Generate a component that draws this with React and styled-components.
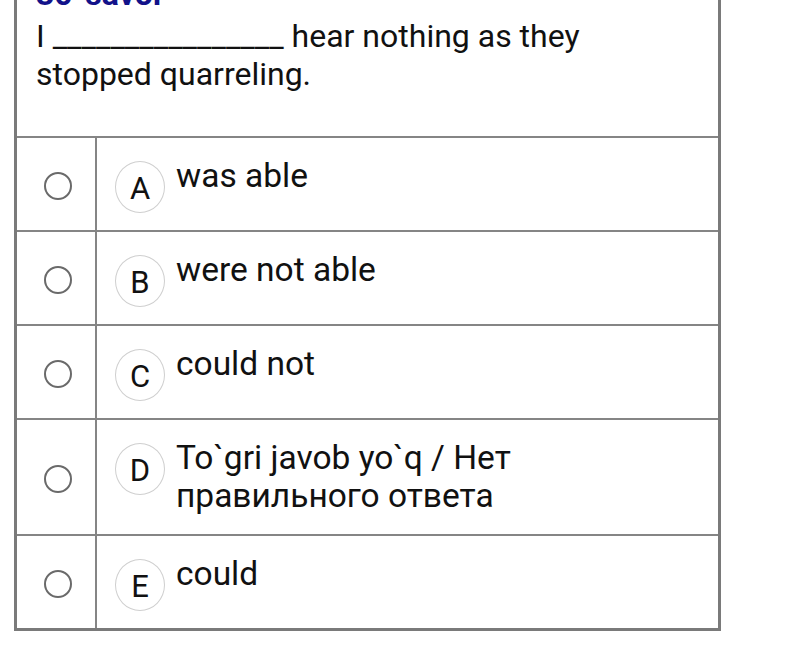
import React from 'react';
import styled, { createGlobalStyle } from 'styled-components';

const GlobalStyle = createGlobalStyle`
  body {
    margin: 0;
    background: #fff;
    font-family: Roboto, "Noto Sans", "Liberation Sans", sans-serif;
    color: #111;
  }
`;

const Page = styled.div`
  margin: -30px 0 0 14px;
  width: 707px;
`;

const Sheet = styled.section`
  border: 3px solid #7a7a7a;
  background: #fff;
`;

const Question = styled.div`
  padding: 2px 20px 43px 19px;
`;

const Title = styled.div`
  font-size: 32px;
  line-height: 38px;
  font-weight: 700;
  color: #12128a;
  margin-bottom: 4px;
`;

const Prompt = styled.div`
  font-size: 32px;
  line-height: 38px;
`;

const OptionRow = styled.div`
  display: grid;
  grid-template-columns: 80px 1fr;
  border-top: 2px solid #858585;
`;

const RadioCell = styled.div`
  display: flex;
  align-items: center;
  justify-content: center;
  padding-top: 4px;
  border-right: 2px solid #858585;
`;

const Radio = styled.span`
  width: 24px;
  height: 24px;
  border: 2px solid #6a6a6a;
  border-radius: 50%;
  margin-left: 4px;
`;

const AnswerCell = styled.div`
  display: flex;
  align-items: flex-start;
  padding: 19px 20px 17px 18px;
`;

const Letter = styled.span`
  flex: none;
  width: 48px;
  height: 47px;
  margin-top: 4px;
  border: 1px solid #cfcfcf;
  border-radius: 50%;
  display: flex;
  align-items: center;
  justify-content: center;
  font-size: 31px;
  padding-top: 3px;
  box-sizing: content-box;
`;

const AnswerText = styled.div`
  font-size: 33.5px;
  line-height: 38px;
  margin-left: 11px;
  padding-bottom: 2px;
`;

const options = [
  { key: 'A', text: 'was able' },
  { key: 'B', text: 'were not able' },
  { key: 'C', text: 'could not' },
  { key: 'D', text: <>To`gri javob yo`q / Нет<br />правильного ответа</> },
  { key: 'E', text: 'could' },
];

export default function App() {
  return (
    <Page>
      <GlobalStyle />
      <Sheet>
        <Question>
          <Title>30-savol</Title>
          <Prompt>
            I ________________ hear nothing as they<br />stopped quarreling.
          </Prompt>
        </Question>
        {options.map(o => (
          <OptionRow key={o.key}>
            <RadioCell>
              <Radio />
            </RadioCell>
            <AnswerCell>
              <Letter>{o.key}</Letter>
              <AnswerText>{o.text}</AnswerText>
            </AnswerCell>
          </OptionRow>
        ))}
      </Sheet>
    </Page>
  );
}
